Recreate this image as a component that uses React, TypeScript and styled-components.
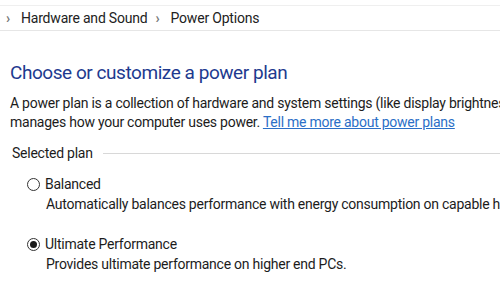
import styled, { createGlobalStyle } from "styled-components";

const Global = createGlobalStyle`
  body {
    margin: 0;
    background: #fff;
    font-family: Roboto, "Noto Sans", sans-serif;
    color: #1c1c1c;
  }
`;

const Page = styled.div`
  width: 500px;
  height: 289px;
  overflow: hidden;
  display: flex;
  flex-direction: column;
`;

const Crumbs = styled.div`
  margin-top: 5px;
  height: 24px;
  border-top: 1px solid #efefef;
  border-bottom: 1px solid #e6e6e6;
  display: flex;
  align-items: center;
  padding-left: 2px;
  font-size: 14px;
  letter-spacing: -0.2px;
  color: #222;
`;

const Chevron = styled.span`
  display: inline-flex;
  width: 12px;
  justify-content: center;
  margin-right: 7px;
  color: #777;
  font-weight: 700;
  font-size: 14px;
`;

const Crumb = styled.span`
  margin-right: 4px;
  white-space: nowrap;
`;

const Body = styled.div`
  padding: 29px 0 0 10px;
  display: flex;
  flex-direction: column;
`;

const Title = styled.h1`
  margin: 0;
  font-weight: 400;
  font-size: 19px;
  letter-spacing: -0.45px;
  line-height: 26px;
  color: #1e3a8f;
  white-space: nowrap;
`;

const Para = styled.p`
  margin: 8px 0 0;
  font-size: 14px;
  letter-spacing: -0.25px;
  line-height: 19px;
  white-space: nowrap;
`;

const Link = styled.a`
  color: #2b6fc7;
  text-decoration: underline;
`;

const Group = styled.div`
  margin-top: 13px;
  padding-left: 2px;
  display: flex;
  align-items: center;
  gap: 10px;
  font-size: 14px;
  letter-spacing: -0.25px;
`;

const Rule = styled.div`
  flex: 1;
  height: 1px;
  background: #d8d8d8;
`;

const Option = styled.div<{ $gap: number }>`
  margin-top: ${(p) => p.$gap}px;
  padding-left: 17px;
  display: flex;
  flex-direction: column;
  font-size: 14px;
  letter-spacing: -0.25px;
`;

const OptionHead = styled.label`
  display: flex;
  align-items: center;
  gap: 5px;
  line-height: 20px;
`;

const Radio = styled.span<{ $checked?: boolean }>`
  width: 11px;
  height: 11px;
  border: 1.5px solid #333;
  border-radius: 50%;
  display: inline-flex;
  align-items: center;
  justify-content: center;
  &::after {
    content: "";
    width: 7px;
    height: 7px;
    border-radius: 50%;
    background: ${(p) => (p.$checked ? "#1a1a1a" : "transparent")};
  }
`;

const Desc = styled.div`
  padding-left: 19px;
  line-height: 21px;
  white-space: nowrap;
`;

function App() {
  return (
    <Page>
      <Global />
      <Crumbs>
        <Chevron>›</Chevron>
        <Crumb>Hardware and Sound</Crumb>
        <Chevron>›</Chevron>
        <Crumb>Power Options</Crumb>
      </Crumbs>
      <Body>
        <Title>Choose or customize a power plan</Title>
        <Para>
          A power plan is a collection of hardware and system settings (like display brightness, sleep, etc.) that
          <br />
          manages how your computer uses power. <Link href="#">Tell me more about power plans</Link>
        </Para>
        <Group>
          <span>Selected plan</span>
          <Rule />
        </Group>
        <Option $gap={13}>
          <OptionHead>
            <Radio />
            Balanced
          </OptionHead>
          <Desc>Automatically balances performance with energy consumption on capable hardware.</Desc>
        </Option>
        <Option $gap={19}>
          <OptionHead>
            <Radio $checked />
            Ultimate Performance
          </OptionHead>
          <Desc>Provides ultimate performance on higher end PCs.</Desc>
        </Option>
      </Body>
    </Page>
  );
}

export default App;
